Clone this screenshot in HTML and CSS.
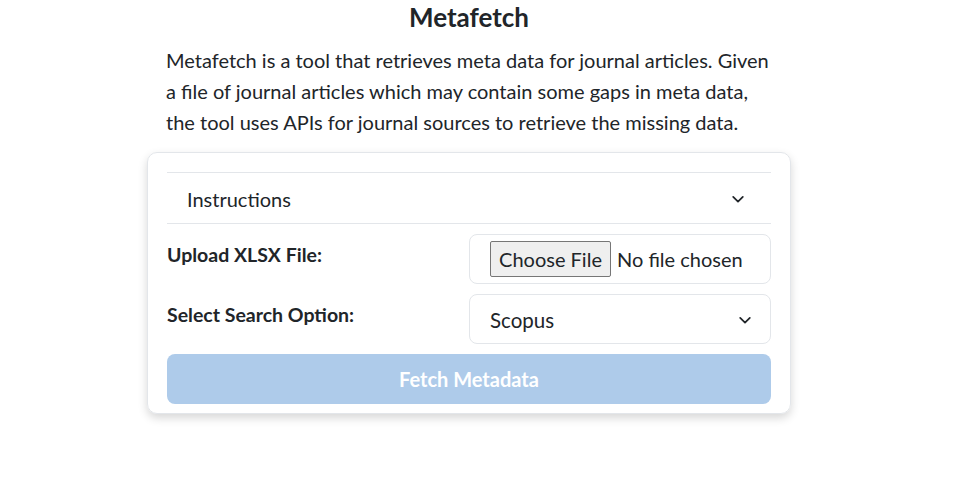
FILE: index.html
```html
<!DOCTYPE html>
<html lang="en">
<head>
<meta charset="utf-8">
<title>Metafetch</title>
<link rel="stylesheet" href="styles.css">
</head>
<body>
<main class="page">
  <h1 class="title">Metafetch</h1>
  <p class="intro">Metafetch is a tool that retrieves meta data for journal articles. Given<br>a file of journal articles which may contain some gaps in meta data,<br>the tool uses APIs for journal sources to retrieve the missing data.</p>
  <section class="card">
    <div class="accordion">
      <span>Instructions</span>
      <svg class="chev" width="14" height="14" viewBox="0 0 16 16"><path d="M2.5 5.5 8 11l5.5-5.5" fill="none" stroke="#212529" stroke-width="2" stroke-linecap="round" stroke-linejoin="round"/></svg>
    </div>
    <div class="row">
      <label class="label" for="file">Upload XLSX File:</label>
      <div class="control"><input id="file" class="file" type="file" accept=".xlsx"></div>
    </div>
    <div class="row">
      <label class="label" for="opt">Select Search Option:</label>
      <div class="control select-wrap">
        <select id="opt" class="select"><option>Scopus</option></select>
        <svg class="chev sel-chev" width="14" height="14" viewBox="0 0 16 16"><path d="M2.5 5.5 8 11l5.5-5.5" fill="none" stroke="#212529" stroke-width="2" stroke-linecap="round" stroke-linejoin="round"/></svg>
      </div>
    </div>
    <button class="fetch" disabled>Fetch Metadata</button>
  </section>
</main>
</body>
</html>
```
FILE: styles.css
```css
* { box-sizing: border-box; }
html, body { margin: 0; padding: 0; background: #fff; }
body {
  font-family: Lato, "Noto Sans", sans-serif;
  color: #212529;
}
.page {
  width: 938px;
  display: flex;
  flex-direction: column;
  align-items: center;
  padding-bottom: 40px;
}
.title {
  margin: 1px 0 0;
  font-size: 26px;
  line-height: 32px;
  font-weight: 700;
}
.intro {
  margin: 12px 0 0;
  width: 606px;
  font-size: 20px;
  line-height: 31px;
}
.card {
  margin-top: 14px;
  width: 644px;
  border: 1px solid #e3e6ea;
  border-radius: 10px;
  box-shadow: 0 4px 10px rgba(0,0,0,0.16);
  padding: 19px 19px 9px;
  display: flex;
  flex-direction: column;
  gap: 10px;
}
.accordion {
  height: 52px;
  border-top: 1px solid #e3e6ea;
  border-bottom: 1px solid #e3e6ea;
  display: flex;
  align-items: center;
  justify-content: space-between;
  padding: 2px 26px 0 20px;
  font-size: 20px;
}
.chev { display: block; }
.row {
  display: grid;
  grid-template-columns: minmax(0, 1fr) minmax(0, 1fr);
  align-items: center;
}
.label {
  font-weight: 700;
  font-size: 19.5px;
  padding-bottom: 9px;
}
.control {
  height: 50px;
  border: 1px solid #e3e6ea;
  border-radius: 8px;
  display: flex;
  align-items: center;
  padding: 0 20px;
  overflow: hidden;
}
.file {
  font-family: inherit;
  font-size: 20px;
  color: #212529;
  width: 100%;
}
.file::file-selector-button {
  font-family: inherit;
  font-size: 20px;
  height: 36px;
  width: 121px;
  padding: 0;
  margin-right: 6px;
  background: #efefef;
  border: 1px solid #767676;
  border-radius: 2px;
  color: #212529;
}
.select-wrap { position: relative; padding: 0; }
.select {
  appearance: none;
  -webkit-appearance: none;
  border: 0;
  background: transparent;
  width: 100%;
  height: 100%;
  padding: 2px 20px 0;
  font-family: inherit;
  font-size: 20.5px;
  color: #212529;
  outline: none;
}
.sel-chev {
  position: absolute;
  right: 18px;
  top: 18px;
  pointer-events: none;
}
.fetch {
  height: 50px;
  border: 0;
  border-radius: 8px;
  background: #aecbea;
  color: #fff;
  font-family: inherit;
  font-weight: 700;
  font-size: 20px;
}
```
